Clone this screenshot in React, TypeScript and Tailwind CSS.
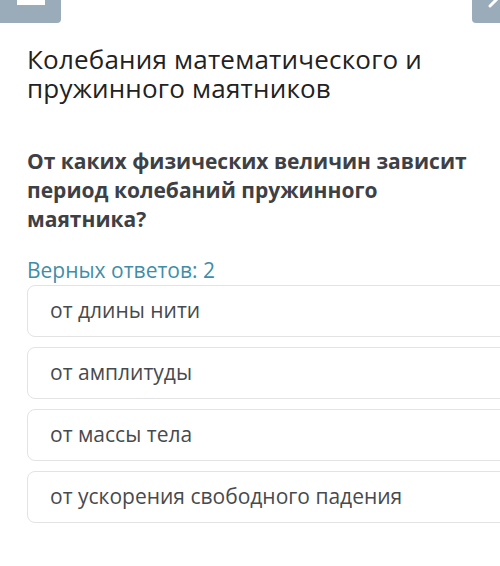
import React from "react";

const options = [
  "от длины нити",
  "от амплитуды",
  "от массы тела",
  "от ускорения свободного падения",
];

export default function App() {
  return (
    <div
      className="w-[500px] h-[566px] bg-white overflow-hidden relative"
      style={{ fontFamily: '"Open Sans", "Noto Sans", sans-serif' }}
    >
      <div className="flex justify-between h-[23px]">
        <div className="w-[61px] h-[23px] bg-[#9aabb9] rounded-br-[4px] relative">
          <div className="absolute left-[17px] top-0 w-[28px] h-[5px] bg-white" />
        </div>
        <div className="w-[28px] h-[23px] bg-[#9aabb9] rounded-bl-[4px] relative overflow-hidden">
          <svg width="28" height="23" viewBox="0 0 28 23" className="absolute inset-0">
            <path d="M18 6 L27 -3" stroke="#fff" strokeWidth="3" strokeLinecap="round" />
          </svg>
        </div>
      </div>
      <div className="pl-[27px]">
        <h1 className="mt-[22px] text-[26px] leading-[29px] text-[#222] font-normal tracking-[0.2px]">
          Колебания математического и
          <br />
          пружинного маятников
        </h1>
        <p className="mt-[44px] text-[21px] leading-[29px] font-bold text-[#3d4146]">
          От каких физических величин зависит
          <br />
          период колебаний пружинного
          <br />
          маятника?
        </p>
        <p className="mt-[24px] text-[21px] leading-[24px] text-[#3f8ea8]">Верных ответов: 2</p>
        <div className="mt-[3px] flex flex-col gap-[10px] w-[490px]">
          {options.map((o) => (
            <div
              key={o}
              className="h-[52px] border border-[#e3e3e3] rounded-[8px] flex items-center pl-[22px] text-[21px] text-[#474a4d]"
            >
              {o}
            </div>
          ))}
        </div>
      </div>
    </div>
  );
}
